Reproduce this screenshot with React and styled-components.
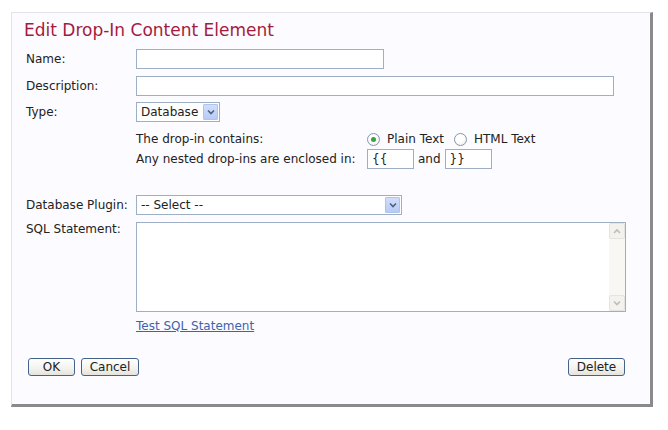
import React from "react";
import styled, { createGlobalStyle } from "styled-components";

const Global = createGlobalStyle`
  html, body { margin: 0; padding: 0; background: #ffffff; }
  body { font-family: "DejaVu Sans", Verdana, sans-serif; font-size: 12px; color: #222; }
  * { box-sizing: border-box; }
`;

const Page = styled.div`
  padding: 12px 0 0 11px;
`;

const Panel = styled.div`
  width: 642px;
  height: 395px;
  background: #fcfbff;
  border-top: 1px solid #e4e4e8;
  border-left: 1px solid #e4e4e8;
  border-right: 3px solid #8a8a8a;
  border-bottom: 3px solid #8a8a8a;
  padding: 7px 25px 0 14px;
  display: flex;
  flex-direction: column;
`;

const Title = styled.h1`
  margin: 0 0 0 -2px;
  font-size: 17px;
  line-height: 21px;
  font-weight: normal;
  color: #a31b3e;
`;

const Row = styled.div`
  display: grid;
  grid-template-columns: 110px 1fr;
  align-items: ${(p) => (p.$top ? "start" : "center")};
  margin-top: ${(p) => p.$mt || 0}px;
  min-height: 20px;
`;

const Label = styled.label`
  font-size: 12px;
  line-height: 15px;
  color: #222;
  padding-left: 0;
  padding-top: ${(p) => p.$pt || 0}px;
`;

const TextInput = styled.input`
  width: ${(p) => p.$w}px;
  height: 20px;
  border: 1px solid #9eafc3;
  background: #ffffff;
  font-family: "DejaVu Sans", Verdana, sans-serif;
  font-size: 12px;
  color: #222;
  padding: 0 0 0 4px;
  margin: 0;
  outline: none;
`;

const SelectBox = styled.div`
  width: ${(p) => p.$w}px;
  height: 20px;
  border: 1px solid #9eafc3;
  background: #fff;
  display: flex;
  align-items: center;
  padding: 1px;
`;

const SelectText = styled.span`
  flex: 1;
  padding-left: 3px;
  font-size: 12px;
  color: #222;
  white-space: nowrap;
`;

const ArrowBox = styled.span`
  width: 15px;
  height: 16px;
  background: linear-gradient(#d1defb, #b6cbf6);
  border: 1px solid #b0c3ec;
  border-radius: 1px;
  display: flex;
  align-items: center;
  justify-content: center;
`;

const Sub = styled.div`
  display: grid;
  grid-template-columns: 231px 1fr;
  align-items: center;
  height: 20px;
  margin-top: ${(p) => p.$mt || 0}px;
`;

const SubText = styled.span`
  font-size: 12px;
  color: #222;
  white-space: nowrap;
`;

const Inline = styled.div`
  display: flex;
  align-items: center;
  gap: ${(p) => p.$gap || 4}px;
`;

const RadioLabel = styled.label`
  display: flex;
  align-items: center;
  gap: 7px;
  font-size: 12px;
  color: #222;
  margin-right: ${(p) => p.$mr || 0}px;
`;

const RadioCircle = styled.span`
  width: 13px;
  height: 13px;
  border-radius: 50%;
  border: 1px solid #8597ad;
  background: radial-gradient(circle at 40% 40%, #ffffff 40%, #e6e6e0 100%);
  display: flex;
  align-items: center;
  justify-content: center;
  &::after {
    content: "";
    width: 5px;
    height: 5px;
    border-radius: 50%;
    background: ${(p) => (p.$checked ? "#3aa23a" : "transparent")};
  }
`;

const TextArea = styled.div`
  width: 490px;
  height: 90px;
  border: 1px solid #9eafc3;
  background: #fff;
  display: flex;
`;

const AreaInput = styled.textarea`
  flex: 1;
  border: none;
  resize: none;
  outline: none;
  background: transparent;
  font-family: "DejaVu Sans", Verdana, sans-serif;
  font-size: 12px;
`;

const ScrollTrack = styled.div`
  width: 16px;
  background: #f8f7f3;
  display: flex;
  flex-direction: column;
  justify-content: space-between;
`;

const ScrollBtn = styled.span`
  width: 16px;
  height: 16px;
  border: 1px solid #e4e3dd;
  border-radius: 2px;
  background: #f3f2ec;
  display: flex;
  align-items: center;
  justify-content: center;
`;

const LinkRow = styled.div`
  margin-top: ${(p) => p.$mt || 0}px;
  padding-left: 110px;
  line-height: 16px;
`;

const Link = styled.a`
  font-size: 12px;
  color: #3c64ad;
  text-decoration: underline;
  cursor: pointer;
`;

const ButtonRow = styled.div`
  margin-top: 24px;
  padding-left: 2px;
  display: flex;
  justify-content: space-between;
  align-items: center;
`;

const Buttons = styled.div`
  display: flex;
  gap: 6px;
`;

const Button = styled.button`
  width: ${(p) => p.$w}px;
  height: 18px;
  padding: 0;
  border: 1px solid #45628a;
  border-radius: 3px;
  background: linear-gradient(#ffffff, #f2f2ee 60%, #e4e3dc);
  font-family: "DejaVu Sans", Verdana, sans-serif;
  font-size: 12px;
  color: #222;
  line-height: 14px;
`;

const Chevron = ({ color = "#4d6185", up = false }) => (
  <svg width="8" height="6" viewBox="0 0 8 6">
    <path
      d={up ? "M1 5 L4 2 L7 5" : "M1 1.5 L4 4.5 L7 1.5"}
      fill="none"
      stroke={color}
      strokeWidth="1.6"
    />
  </svg>
);

const Select = ({ w, value }) => (
  <SelectBox $w={w}>
    <SelectText>{value}</SelectText>
    <ArrowBox>
      <Chevron />
    </ArrowBox>
  </SelectBox>
);

export default function App() {
  return (
    <>
      <Global />
      <Page>
        <Panel>
          <Title>Edit Drop-In Content Element</Title>
          <Row $mt={8}>
            <Label>Name:</Label>
            <TextInput $w={248} />
          </Row>
          <Row $mt={7}>
            <Label>Description:</Label>
            <TextInput $w={478} />
          </Row>
          <Row $mt={6}>
            <Label>Type:</Label>
            <Select w={84} value="Database" />
          </Row>
          <Row $mt={7}>
            <span />
            <div>
              <Sub>
                <SubText>The drop-in contains:</SubText>
                <Inline $gap={0}>
                  <RadioLabel $mr={6}>
                    <RadioCircle $checked />
                    Plain Text
                  </RadioLabel>
                  <RadioLabel>
                    <RadioCircle />
                    HTML Text
                  </RadioLabel>
                </Inline>
              </Sub>
              <Sub>
                <SubText>Any nested drop-ins are enclosed in:</SubText>
                <Inline $gap={4}>
                  <TextInput $w={47} defaultValue="{{" />
                  <SubText>and</SubText>
                  <TextInput $w={47} defaultValue="}}" />
                </Inline>
              </Sub>
            </div>
          </Row>
          <Row $mt={26}>
            <Label>Database Plugin:</Label>
            <Select w={266} value="-- Select --" />
          </Row>
          <Row $mt={7} $top>
            <Label $pt={0}>SQL Statement:</Label>
            <TextArea>
              <AreaInput />
              <ScrollTrack>
                <ScrollBtn>
                  <Chevron up color="#bdbdbd" />
                </ScrollBtn>
                <ScrollBtn>
                  <Chevron color="#bdbdbd" />
                </ScrollBtn>
              </ScrollTrack>
            </TextArea>
          </Row>
          <LinkRow $mt={6}>
            <Link>Test SQL Statement</Link>
          </LinkRow>
          <ButtonRow>
            <Buttons>
              <Button $w={47}>OK</Button>
              <Button $w={58}>Cancel</Button>
            </Buttons>
            <Button $w={57}>Delete</Button>
          </ButtonRow>
        </Panel>
      </Page>
    </>
  );
}
